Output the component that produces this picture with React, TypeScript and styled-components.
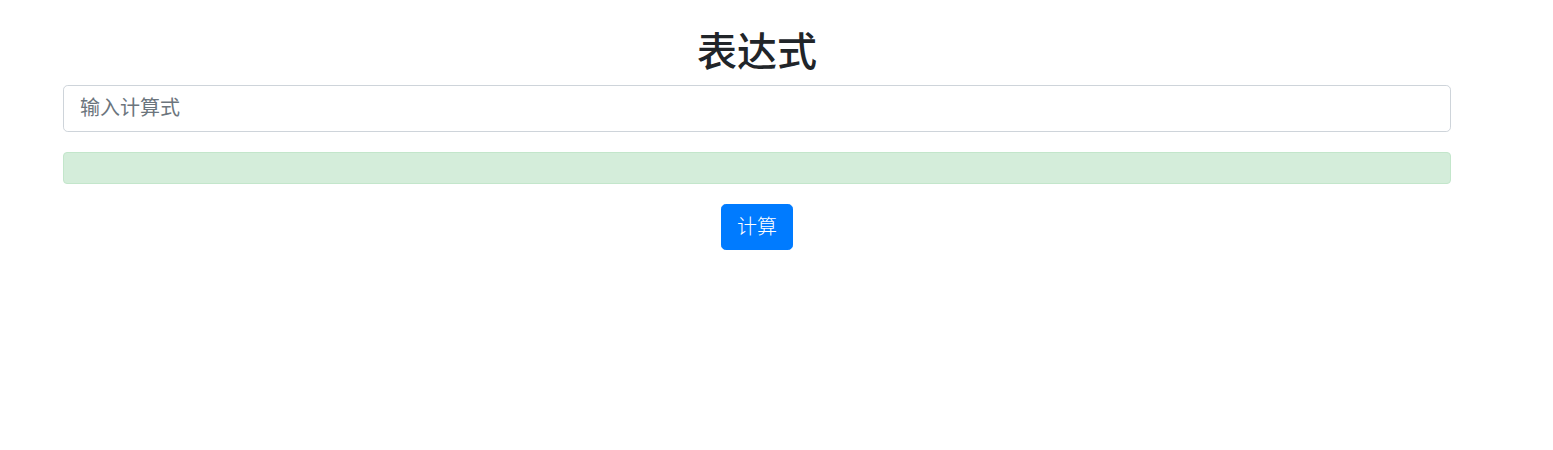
import React from "react";
import styled, { createGlobalStyle } from "styled-components";

const Global = createGlobalStyle`
  html, body { margin: 0; padding: 0; background: #fff; }
  body {
    font-family: "Noto Sans", "Noto Sans CJK SC", sans-serif;
    color: #212529;
  }
  * { box-sizing: border-box; }
`;

const Page = styled.div`
  width: 1388px;
  margin-left: 63px;
  padding-top: 25px;
  display: flex;
  flex-direction: column;
  align-items: stretch;
`;

const Title = styled.h1`
  margin: 0 0 12px;
  font-size: 40px;
  line-height: 48px;
  font-weight: 500;
  text-align: center;
  font-family: "Noto Sans CJK SC", sans-serif;
  color: #212529;
`;

const Input = styled.input`
  display: block;
  width: 100%;
  height: 47px;
  padding: 0 16px 5px;
  font-size: 20px;
  font-family: "Noto Sans CJK SC", sans-serif;
  color: #495057;
  background: #fff;
  border: 1px solid #ced4da;
  border-radius: 4.8px;
  outline: none;
  &::placeholder { color: #6c757d; opacity: 1; }
`;

const Alert = styled.div`
  margin-top: 20px;
  height: 32px;
  background: #d4edda;
  border: 1px solid #c3e6cb;
  border-radius: 4px;
  color: #155724;
`;

const Actions = styled.div`
  display: flex;
  justify-content: center;
  margin-top: 20px;
`;

const Button = styled.button`
  height: 46px;
  padding: 0 15px 4px;
  font-size: 20px;
  font-weight: 300;
  font-family: "Noto Sans CJK SC", sans-serif;
  color: #fff;
  background: #007bff;
  border: 1px solid #007bff;
  border-radius: 4.8px;
  cursor: pointer;
`;

export default function App() {
  return (
    <>
      <Global />
      <Page>
        <Title>表达式</Title>
        <Input placeholder="输入计算式" />
        <Alert />
        <Actions>
          <Button>计算</Button>
        </Actions>
      </Page>
    </>
  );
}
